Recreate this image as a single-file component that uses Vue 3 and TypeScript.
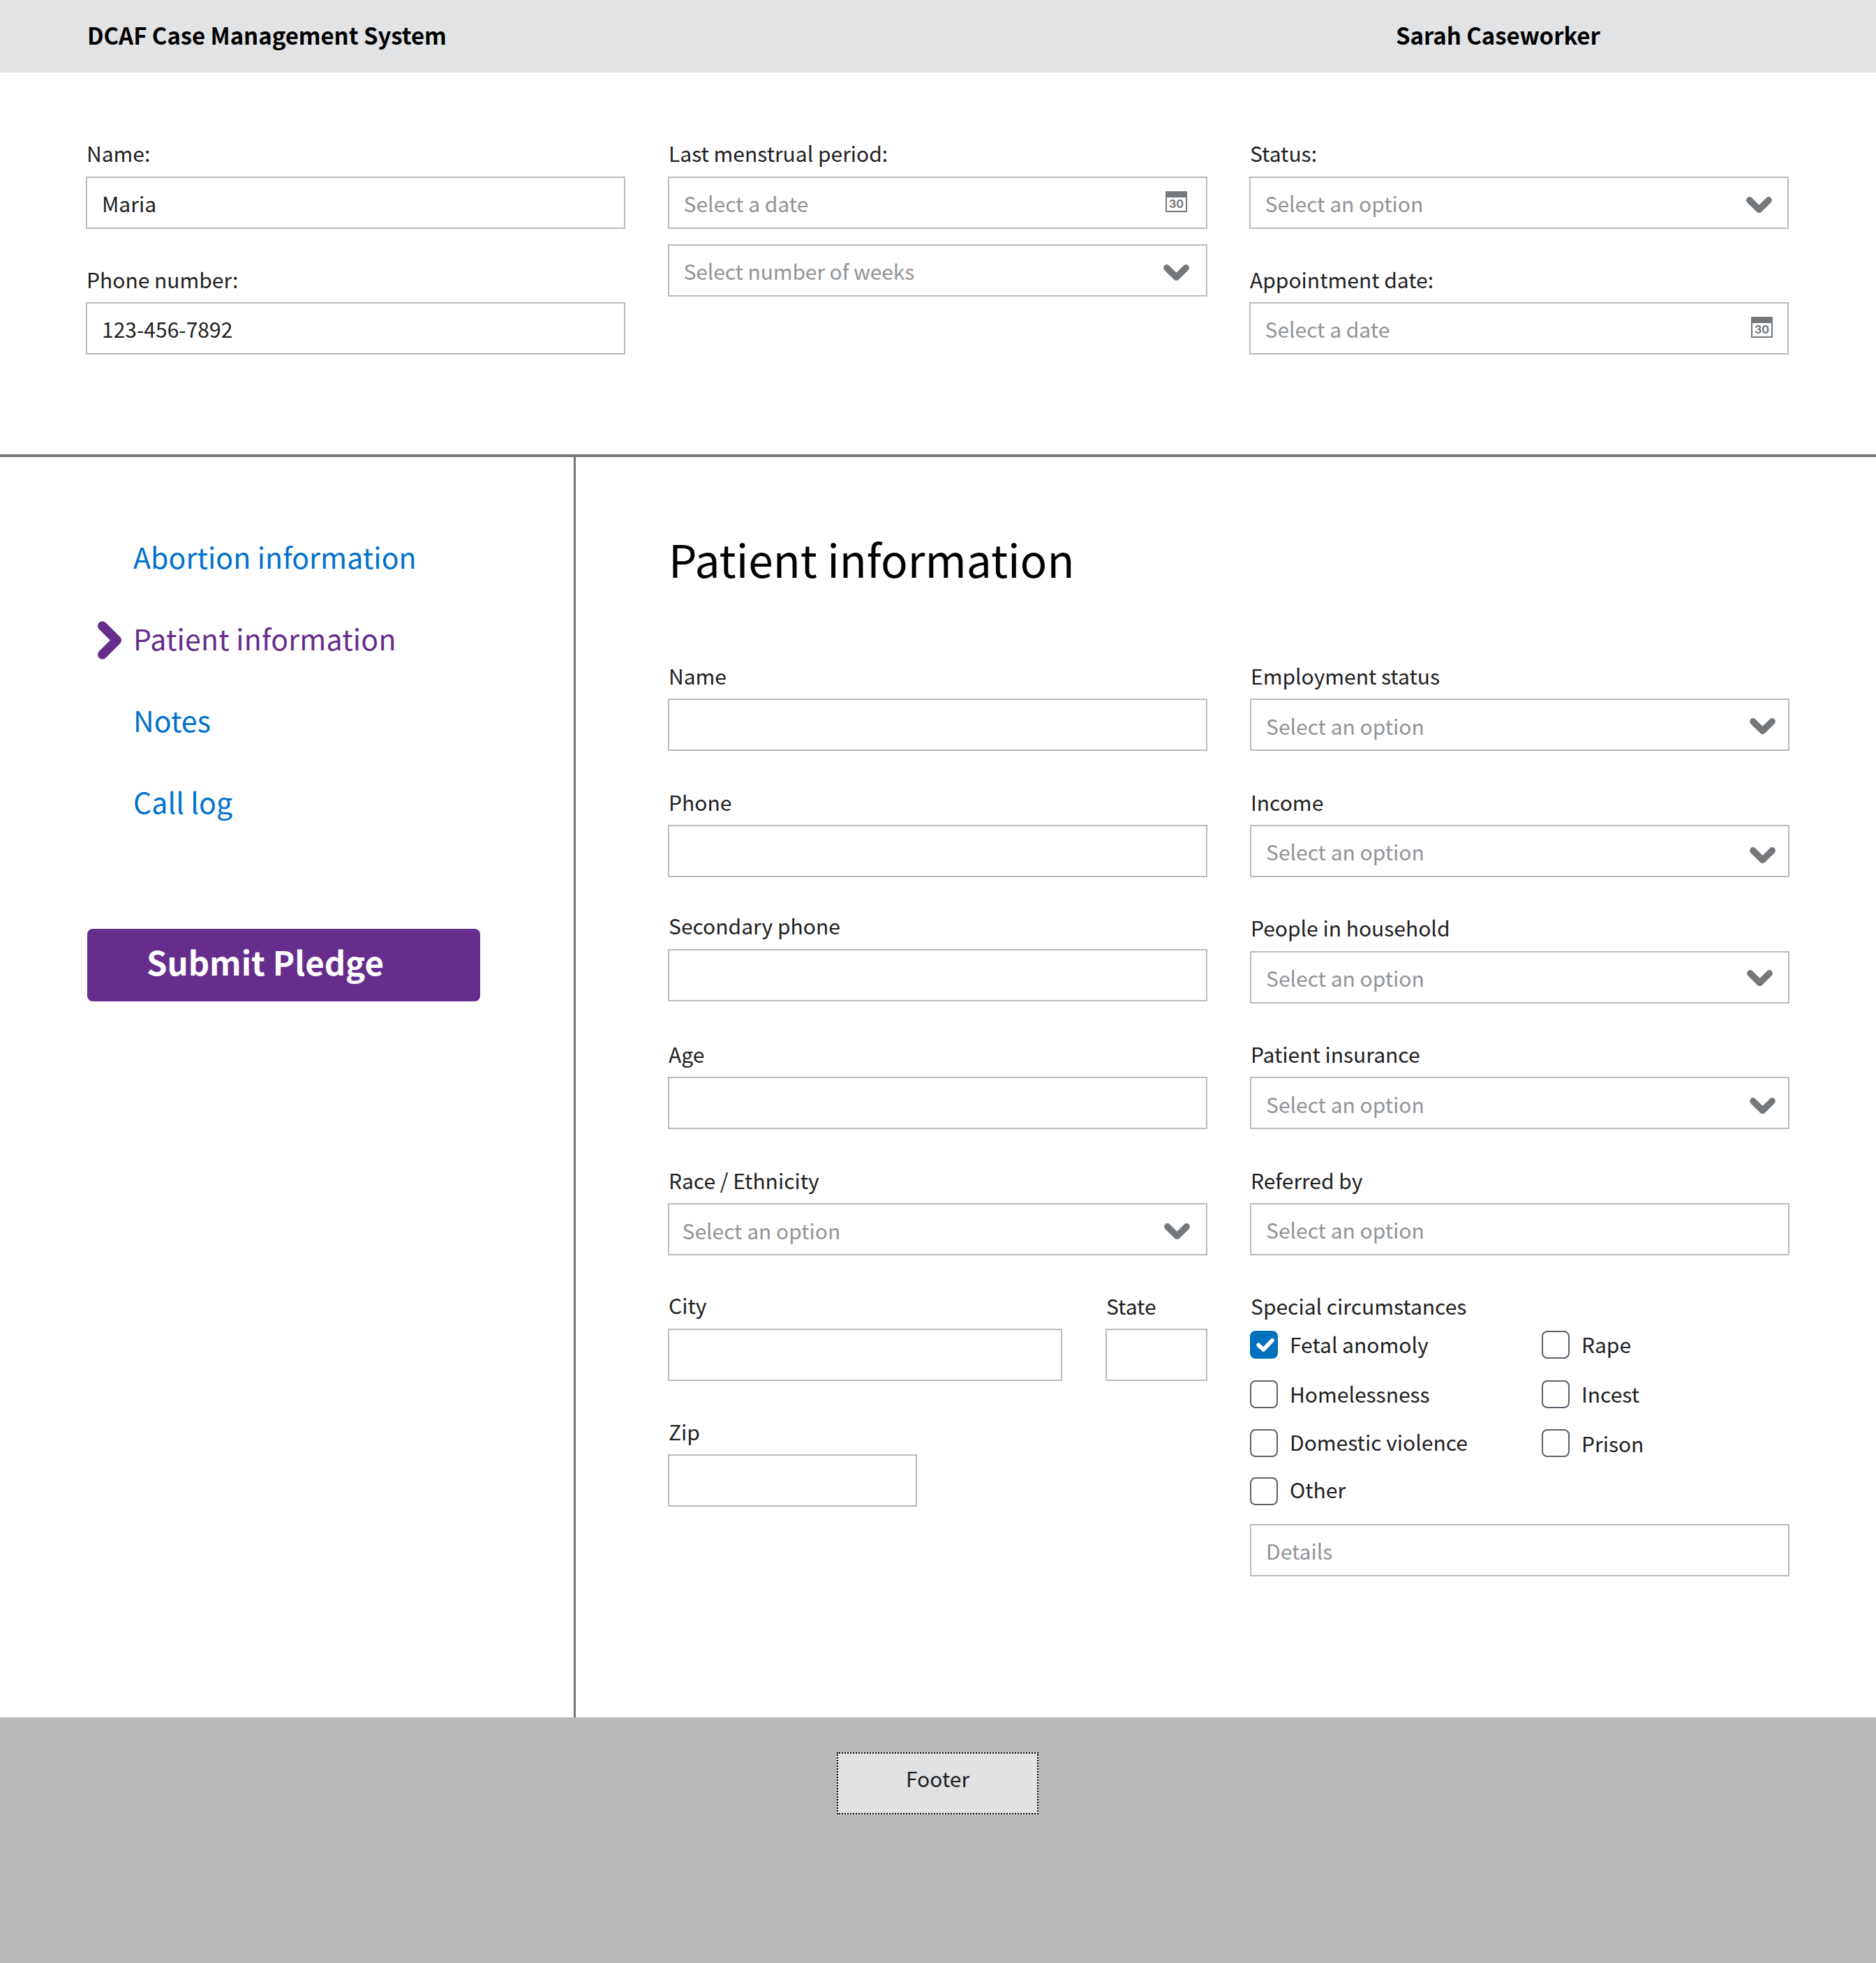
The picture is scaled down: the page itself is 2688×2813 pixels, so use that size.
<script setup lang="ts">
type Kind = 'text' | 'select' | 'date'

interface Field {
  id: string
  label?: string
  kind: Kind
  value?: string
  placeholder?: string
}

interface Circumstance {
  id: string
  label: string
  checked: boolean
}

const summaryColumns: Field[][] = [
  [
    { id: 'caller-name', label: 'Name:', kind: 'text', value: 'Maria' },
    { id: 'caller-phone', label: 'Phone number:', kind: 'text', value: '123-456-7892' },
  ],
  [
    { id: 'lmp-date', label: 'Last menstrual period:', kind: 'date', placeholder: 'Select a date' },
    { id: 'lmp-weeks', kind: 'select', placeholder: 'Select number of weeks' },
  ],
  [
    { id: 'status', label: 'Status:', kind: 'select', placeholder: 'Select an option' },
    { id: 'appointment', label: 'Appointment date:', kind: 'date', placeholder: 'Select a date' },
  ],
]

const navItems = [
  { label: 'Abortion information', active: false },
  { label: 'Patient information', active: true },
  { label: 'Notes', active: false },
  { label: 'Call log', active: false },
]

const personalFields: Field[] = [
  { id: 'name', label: 'Name', kind: 'text' },
  { id: 'phone', label: 'Phone', kind: 'text' },
  { id: 'secondary', label: 'Secondary phone', kind: 'text' },
  { id: 'age', label: 'Age', kind: 'text' },
  { id: 'race', label: 'Race / Ethnicity', kind: 'select', placeholder: 'Select an option' },
]

const backgroundFields: Field[] = [
  { id: 'employment', label: 'Employment status', kind: 'select', placeholder: 'Select an option' },
  { id: 'income', label: 'Income', kind: 'select', placeholder: 'Select an option' },
  { id: 'household', label: 'People in household', kind: 'select', placeholder: 'Select an option' },
  { id: 'insurance', label: 'Patient insurance', kind: 'select', placeholder: 'Select an option' },
  { id: 'referred', label: 'Referred by', kind: 'text', placeholder: 'Select an option' },
]

const circumstances: Circumstance[] = [
  { id: 'fetal', label: 'Fetal anomoly', checked: true },
  { id: 'rape', label: 'Rape', checked: false },
  { id: 'homeless', label: 'Homelessness', checked: false },
  { id: 'incest', label: 'Incest', checked: false },
  { id: 'domestic', label: 'Domestic violence', checked: false },
  { id: 'prison', label: 'Prison', checked: false },
  { id: 'other', label: 'Other', checked: false },
]

const columnGroups = [personalFields, backgroundFields]
</script>

<template>
  <div class="page">
    <header class="topbar">
      <div class="brand">DCAF Case Management System</div>
      <div class="user">Sarah Caseworker</div>
    </header>

    <section class="summary">
      <div v-for="(column, i) in summaryColumns" :key="i" class="column">
        <div v-for="f in column" :key="f.id" class="field" :class="'field-' + f.id">
          <div v-if="f.label" class="label">{{ f.label }}</div>
          <div class="box">
            <span class="text" :class="{ placeholder: !f.value }">{{ f.value ?? f.placeholder }}</span>
            <svg v-if="f.kind === 'select'" class="icon chevron" viewBox="0 0 37 23.3">
              <path d="M4.8 4.8 18.5 18.3 32.2 4.8" />
            </svg>
            <svg v-else-if="f.kind === 'date'" class="icon calendar" viewBox="0 0 31 30">
              <path fill-rule="evenodd" d="M1 0H30Q31 0 31 1V29Q31 30 30 30H1Q0 30 0 29V1Q0 0 1 0ZM2 9V28H29V9Z" />
              <text x="15.5" y="24">30</text>
            </svg>
          </div>
        </div>
      </div>
    </section>

    <main class="main">
      <aside class="sidebar">
        <nav class="nav">
          <a v-for="item in navItems" :key="item.label" class="nav-item" :class="{ active: item.active }">
            <span class="marker">
              <svg v-if="item.active" viewBox="0 0 34 55">
                <path d="M6.7 6.9 27.3 27.5 6.7 48.1" />
              </svg>
            </span>
            <span>{{ item.label }}</span>
          </a>
        </nav>
        <button class="submit" type="button">Submit Pledge</button>
      </aside>

      <section class="content">
        <h1 class="title">Patient information</h1>
        <div class="form">
          <div v-for="(group, g) in columnGroups" :key="g" class="column">
            <div v-for="f in group" :key="f.id" class="field" :class="'field-' + f.id">
              <div class="label">{{ f.label }}</div>
              <div class="box">
                <span class="text placeholder">{{ f.placeholder }}</span>
                <svg v-if="f.kind === 'select'" class="icon chevron" viewBox="0 0 37 23.3">
                  <path d="M4.8 4.8 18.5 18.3 32.2 4.8" />
                </svg>
              </div>
            </div>

            <template v-if="g === 0">
              <div class="row">
                <div class="field field-city">
                  <div class="label">City</div>
                  <div class="box"></div>
                </div>
                <div class="field field-state">
                  <div class="label">State</div>
                  <div class="box"></div>
                </div>
              </div>
              <div class="field field-zip">
                <div class="label">Zip</div>
                <div class="box"></div>
              </div>
            </template>

            <div v-else class="special">
              <div class="label">Special circumstances</div>
              <div class="checks">
                <div v-for="c in circumstances" :key="c.id" class="check" :class="'check-' + c.id">
                  <span class="tick" :class="{ on: c.checked }">
                    <svg v-if="c.checked" viewBox="0 0 40 40">
                      <path d="M12.2 20.3 19.2 27 32 13.8" />
                    </svg>
                  </span>
                  <span class="check-label">{{ c.label }}</span>
                </div>
              </div>
              <div class="box">
                <span class="text placeholder">Details</span>
              </div>
            </div>
          </div>
        </div>
      </section>
    </main>

    <footer class="footer">
      <div class="footer-box">Footer</div>
    </footer>
  </div>
</template>

<style>
body {
  background: #fff;
}
</style>

<style scoped>
.page {
  width: 2688px;
  height: 2813px;
  display: flex;
  flex-direction: column;
  overflow: hidden;
  font-family: "Noto Sans CJK SC", "Noto Sans", sans-serif;
  font-size: 30px;
  line-height: 40px;
  color: #212121;
  background: #fff;
  white-space: nowrap;
}

.page * {
  box-sizing: border-box;
}

/* Top bar */
.topbar {
  flex: none;
  display: flex;
  height: 104px;
  padding-left: 125px;
  background: #e2e3e5;
  color: #000;
  font-size: 33px;
  font-weight: 700;
  line-height: 100px;
  letter-spacing: -0.07px;
}

.brand {
  width: 1875px;
}

/* Fields */
.column {
  width: 773px;
  display: flex;
  flex-direction: column;
}

.column:last-child {
  width: 772.5px;
}

.field + .field {
  margin-top: 53px;
}

.label {
  height: 40px;
  margin-bottom: 13px;
  padding-left: 1px;
}

.box {
  display: flex;
  justify-content: space-between;
  height: 75px;
  border: 2px solid #babbbd;
  background: #fff;
}

.text {
  padding: 16px 0 0 21px;
}

.placeholder {
  color: #929497;
}

.icon {
  flex: none;
  overflow: visible;
}

.chevron {
  width: 37px;
  height: 23.3px;
  margin: 27px 21px 0 0;
}

.chevron path {
  fill: none;
  stroke: #74787b;
  stroke-width: 9.4;
  stroke-linecap: round;
  stroke-linejoin: round;
}

.calendar {
  width: 31px;
  height: 30px;
  margin: 19px 27px 0 0;
  fill: #74787b;
}

.calendar text {
  font-family: Inter, sans-serif;
  font-size: 16px;
  font-weight: 700;
  text-anchor: middle;
}

/* Summary */
.summary {
  flex: none;
  display: flex;
  gap: 61px;
  height: 551px;
  padding: 95px 0 0 123px;
  border-bottom: 4px solid #74777a;
}

.summary .column:last-child {
  margin-left: -1px;
}

.summary .field:first-child .label {
  margin-bottom: 14px;
}

.summary .field:last-child {
  margin-top: 52px;
}

.summary .placeholder {
  padding-left: 20.5px;
}

.summary .field.field-lmp-weeks {
  margin-top: 22px;
}

.field-lmp-weeks .text {
  letter-spacing: -0.1px;
}

.field-lmp-weeks .chevron {
  margin-right: 24px;
}

.field-status .chevron {
  margin: 27px 22px 0 0;
}

.field-appointment .calendar {
  margin: 19px 21px 0 0;
}

/* Sidebar */
.main {
  flex: none;
  display: flex;
  height: 1806px;
}

.sidebar {
  width: 825px;
  padding: 84px 0 0 125px;
  border-right: 3px solid #74777a;
}

.nav {
  display: flex;
  flex-direction: column;
  font-size: 41px;
  line-height: 117px;
  letter-spacing: 0.1px;
}

.nav-item {
  display: flex;
  height: 117px;
  color: #0071ce;
}

.nav-item.active {
  color: #662d8c;
  letter-spacing: 0.22px;
}

.marker {
  width: 66px;
  padding: 34px 0 0 15px;
}

.marker svg {
  display: block;
  width: 34px;
  height: 55px;
}

.marker path {
  fill: none;
  stroke: currentColor;
  stroke-width: 13.4;
  stroke-linecap: round;
  stroke-linejoin: round;
}

.submit {
  display: block;
  width: 563px;
  height: 104px;
  margin-top: 124px;
  padding: 0 0 10px 85px;
  border: 0;
  border-radius: 8px;
  background: #662d8c;
  color: #fff;
  font-family: inherit;
  font-size: 47.3px;
  font-weight: 700;
  line-height: 94px;
  text-align: left;
}

/* Patient form */
.content {
  padding: 105px 0 0 132px;
}

.title {
  margin: 0 0 108px;
  padding-left: 1px;
  color: #000;
  font-size: 64px;
  font-weight: 400;
  line-height: 80px;
}

.form {
  display: flex;
  gap: 61px;
}

.field + .field-secondary {
  margin-top: 49px;
}

.field-secondary .label {
  margin-bottom: 14px;
}

.field + .field-age {
  margin-top: 55px;
}

.field-race .text {
  padding: 17px 0 0 18.5px;
}

.field-race .chevron {
  margin-right: 23px;
}

.field + .field-household {
  margin-top: 52px;
}

.field-household .label {
  margin-bottom: 14px;
}

.field + .field-insurance {
  margin-top: 52px;
}

.field-employment .text,
.field-insurance .text {
  padding-top: 17px;
}

.field-employment .chevron {
  margin: 26px 18px 0 0;
}

.field-income .chevron {
  margin: 30px 18px 0 0;
}

.field-household .chevron {
  margin: 25px 22px 0 0;
}

.field-insurance .chevron {
  margin: 28px 18px 0 0;
}

.row {
  display: flex;
  justify-content: space-between;
  margin-top: 51px;
}

.row .field {
  margin-top: 0;
}

.field-city {
  width: 565px;
}

.field-city .label {
  margin-bottom: 14px;
}

.row .field-state {
  width: 146px;
  padding-top: 1px;
}

.field-zip {
  width: 357px;
  margin-top: 52px;
}

/* Special circumstances */
.special {
  margin-top: 52px;
}

.special .label {
  margin-bottom: 16px;
}

.checks {
  display: grid;
  grid-template-columns: 418px 354px;
  grid-template-rows: 71px 70px 69px 40px;
  margin-bottom: 27px;
}

.check {
  display: flex;
  gap: 17px;
  height: 40px;
}

.tick {
  flex: none;
  width: 40px;
  height: 40px;
  border: 2px solid #5b616b;
  border-radius: 8px;
}

.tick.on {
  border: 0;
  background: #0071bc;
}

.tick svg {
  display: block;
}

.tick path {
  fill: none;
  stroke: #fff;
  stroke-width: 5.8;
  stroke-linecap: round;
  stroke-linejoin: round;
}

.check-label {
  margin-top: -1px;
}

.check-domestic .check-label {
  margin-top: -2px;
}

.check-prison .check-label {
  margin-top: 0;
}

.check-other .check-label {
  margin-top: -3px;
}

/* Footer */
.footer {
  flex: 1;
  padding: 50px 0 0 1199px;
  background: #b8b9bb;
}

.footer-box {
  width: 289px;
  height: 89px;
  padding-left: 97px;
  border: 2px dotted #000;
  background: #e1e2e4;
  line-height: 70px;
}
</style>
